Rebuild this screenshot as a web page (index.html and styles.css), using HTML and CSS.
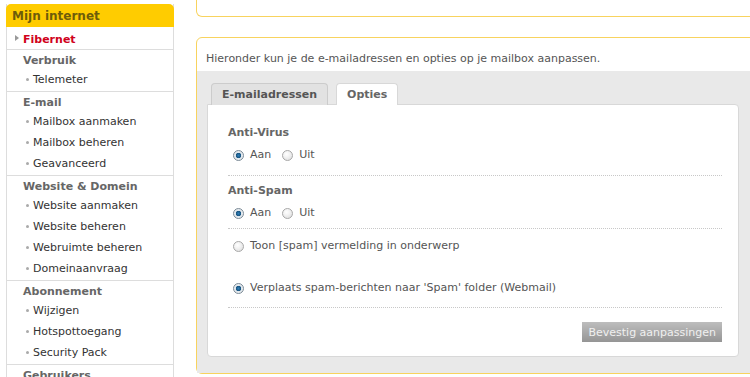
FILE: index.html
```html
<!DOCTYPE html>
<html lang="nl">
<head>
    <meta charset="UTF-8">
    <title>Mijn internet - Mailbox opties</title>
    <link rel="stylesheet" href="styles.css">
</head>
<body>
    <div class="page">
        <div class="sidebar">
            <div class="sidebar-title">Mijn internet</div>
            <div class="sidebar-top"><a href="#" class="active">Fibernet</a></div>

            <div class="sidebar-group">
                <div class="group-title">Verbruik</div>
                <a href="#" class="item">Telemeter</a>
            </div>

            <div class="sidebar-group">
                <div class="group-title">E-mail</div>
                <a href="#" class="item">Mailbox aanmaken</a>
                <a href="#" class="item">Mailbox beheren</a>
                <a href="#" class="item">Geavanceerd</a>
            </div>

            <div class="sidebar-group">
                <div class="group-title">Website &amp; Domein</div>
                <a href="#" class="item">Website aanmaken</a>
                <a href="#" class="item">Website beheren</a>
                <a href="#" class="item">Webruimte beheren</a>
                <a href="#" class="item">Domeinaanvraag</a>
            </div>

            <div class="sidebar-group">
                <div class="group-title">Abonnement</div>
                <a href="#" class="item">Wijzigen</a>
                <a href="#" class="item">Hotspottoegang</a>
                <a href="#" class="item">Security Pack</a>
            </div>

            <div class="sidebar-group">
                <div class="group-title">Gebruikers</div>
            </div>
        </div>

        <div class="main">
            <div class="box box-top"></div>

            <div class="box">
                <p class="intro">Hieronder kun je de e-mailadressen en opties op je mailbox aanpassen.</p>

                <div class="tabs-area">
                    <div class="tabs">
                        <a href="#" class="tab">E-mailadressen</a>
                        <a href="#" class="tab tab-active">Opties</a>
                    </div>

                    <form class="panel">
                        <div class="option option-first">
                            <div class="option-title">Anti-Virus</div>
                            <div class="radio-row">
                                <label><input type="radio" name="virus" checked> Aan</label>
                                <label><input type="radio" name="virus"> Uit</label>
                            </div>
                        </div>

                        <div class="option">
                            <div class="option-title">Anti-Spam</div>
                            <div class="radio-row">
                                <label><input type="radio" name="spam" checked> Aan</label>
                                <label><input type="radio" name="spam"> Uit</label>
                            </div>
                        </div>

                        <div class="option option-spam">
                            <div class="radio-row">
                                <label><input type="radio" name="spamaction"> Toon [spam] vermelding in onderwerp</label>
                            </div>
                            <div class="radio-row radio-row-far">
                                <label><input type="radio" name="spamaction" checked> Verplaats spam-berichten naar 'Spam' folder (Webmail)</label>
                            </div>
                        </div>

                        <div class="actions">
                            <button type="button">Bevestig aanpassingen</button>
                        </div>
                    </form>
                </div>
            </div>
        </div>
    </div>
</body>
</html>
```

FILE: styles.css
```css
* {
    margin: 0;
    padding: 0;
    box-sizing: border-box;
}

body {
    font-family: "DejaVu Sans", Verdana, sans-serif;
    font-size: 11px;
    color: #555;
    background: #fff;
    overflow: hidden;
}

a {
    text-decoration: none;
}

.page {
    display: flex;
    width: 900px;
}

/* Zijbalk */
.sidebar {
    width: 168px;
    margin: 4px 0 0 6px;
    border-left: 1px solid #ddd;
    border-right: 1px solid #ddd;
    flex-shrink: 0;
}

.sidebar-title {
    background: #ffcc00;
    color: #6e5c0a;
    font-weight: bold;
    font-size: 12px;
    height: 23px;
    line-height: 24px;
    padding-left: 6px;
    margin: 0 -1px;
    border-radius: 5px 5px 0 0;
}

.sidebar-top {
    padding: 4px 0 0 16px;
    line-height: 18px;
    border-bottom: 1px solid #ddd;
}

.sidebar-top .active {
    position: relative;
    color: #d0021b;
    font-weight: bold;
}

.sidebar-top .active::before {
    content: "";
    position: absolute;
    left: -8px;
    top: 2px;
    border-left: 4px solid #999;
    border-top: 3px solid transparent;
    border-bottom: 3px solid transparent;
}

.sidebar-group {
    padding: 3px 0 1px 16px;
    border-bottom: 1px solid #ddd;
}

.group-title {
    color: #666;
    font-weight: bold;
    line-height: 16px;
}

.item {
    display: flex;
    align-items: center;
    gap: 4px;
    line-height: 21px;
    color: #333;
    padding-left: 3px;
}

.item::before {
    content: "";
    width: 3px;
    height: 3px;
    border-radius: 50%;
    background: #aaa;
}

/* Inhoud */
.main {
    margin-left: 22px;
    width: 620px;
}

.box {
    border: 1px solid #f8d35e;
    border-radius: 6px;
}

.box-top {
    height: 17px;
    border-top: none;
    border-radius: 0 0 6px 6px;
    margin-bottom: 20px;
}

.intro {
    line-height: 18px;
    padding: 12px 0 3px 9px;
}

.tabs-area {
    background: #e9e9e9;
    padding: 12px 0 16px 10px;
}

.tabs {
    display: flex;
    gap: 8px;
    padding-left: 4px;
}

.tab {
    display: block;
    height: 22px;
    line-height: 21px;
    padding: 0 10px;
    font-weight: bold;
    color: #555;
    background: #e2e2e2;
    border: 1px solid #ccc;
    border-bottom: none;
    border-radius: 4px 4px 0 0;
    margin-bottom: -1px;
    position: relative;
}

.tab-active {
    background: #fff;
    color: #666;
    border-color: #d8d8d8;
}

.panel {
    width: 532px;
    background: #fff;
    border: 1px solid #d8d8d8;
    border-radius: 0 4px 4px 4px;
    padding: 19px 16px 14px 20px;
}

.option {
    border-bottom: 1px dotted #c8c8c8;
    padding: 6px 0 5px;
}

.option-first {
    padding: 0 0 10px;
}

.option-title {
    color: #666;
    font-weight: bold;
    line-height: 18px;
}

.radio-row {
    display: flex;
    gap: 11px;
    margin-top: 3px;
    padding-left: 5px;
    line-height: 20px;
}

.option-spam {
    padding: 4px 0 9px;
}

.radio-row-far {
    margin-top: 22px;
}

.radio-row label {
    display: flex;
    align-items: center;
    gap: 6px;
}

.radio-row input {
    appearance: none;
    -webkit-appearance: none;
    width: 11px;
    height: 11px;
    border-radius: 50%;
    border: 1px solid #a8a8a8;
    background: radial-gradient(circle at 40% 35%, #fff 0, #f2f2f2 40%, #d8d8d8 100%);
}

.radio-row input:checked {
    background: radial-gradient(circle, #2f7fb8 0, #17527e 2.5px, #dfe6ec 3px, #f4f4f4 100%);
    border-color: #7b8a96;
}

.actions {
    display: flex;
    justify-content: flex-end;
    margin-top: 14px;
}

button {
    font-family: inherit;
    font-size: 11px;
    color: #f0f0f0;
    height: 20px;
    padding: 0 6px;
    border: none;
    background: linear-gradient(#bdbdbd, #959595);
}
```
